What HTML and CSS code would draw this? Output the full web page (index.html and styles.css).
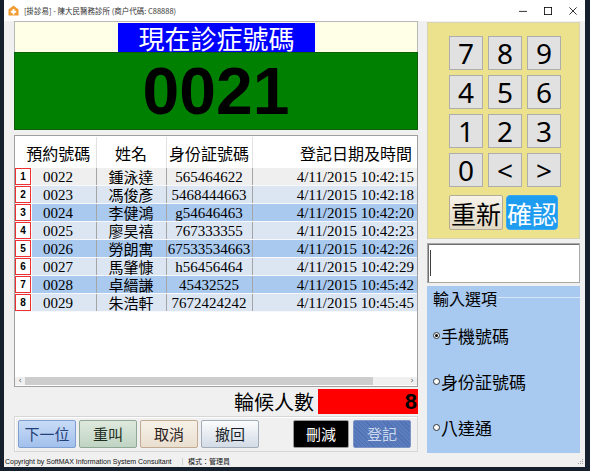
FILE: index.html
```html
<!DOCTYPE html>
<html lang="zh-Hant">
<head>
    <meta charset="UTF-8">
    <meta name="viewport" content="width=device-width, initial-scale=1.0">
    <title>掛診易</title>
    <link rel="stylesheet" href="styles.css">
</head>
<body>
    <div class="window">
        <div class="titlebar">
            <svg class="app-icon" viewBox="0 0 11 11">
                <path d="M5.5 0.5 L10.5 4.5 L10.5 10.5 L0.5 10.5 L0.5 4.5 Z" fill="#f29a2e"/>
                <rect x="4.5" y="4" width="2" height="5.5" fill="#fff"/>
                <rect x="2.75" y="5.75" width="5.5" height="2" fill="#fff"/>
            </svg>
            <span class="title-text">[掛診易] - 陳大民醫務診所 (商户代碼: C88888)</span>
            <div class="win-controls">
                <span class="ctl"><svg viewBox="0 0 10 10"><path d="M0 5.5 H10" stroke="#000" stroke-width="1"/></svg></span>
                <span class="ctl"><svg viewBox="0 0 10 10"><rect x="0.5" y="0.5" width="9" height="9" fill="none" stroke="#000"/></svg></span>
                <span class="ctl"><svg viewBox="0 0 10 10"><path d="M0.5 0.5 L9.5 9.5 M9.5 0.5 L0.5 9.5" stroke="#000"/></svg></span>
            </div>
        </div>

        <div class="main">
            <div class="left">
                <div class="now-bar"><div class="now-label">現在診症號碼</div></div>
                <div class="now-number">0021</div>

                <div class="list-box">
                    <table class="queue">
                        <colgroup>
                            <col class="c-mark"><col class="c-no"><col class="c-name"><col class="c-id"><col class="c-date">
                        </colgroup>
                        <thead>
                            <tr>
                                <th class="h-no" colspan="2">預約號碼</th>
                                <th>姓名</th>
                                <th>身份証號碼</th>
                                <th class="h-date">登記日期及時間</th>
                            </tr>
                        </thead>
                        <tbody>
                            <tr class="row-sel"><td class="mark"><span>1</span></td><td class="no">0022</td><td class="name">鍾泳達</td><td class="id">565464622</td><td class="date">4/11/2015 10:42:15</td></tr>
                            <tr class="row-a"><td class="mark"><span>2</span></td><td class="no">0023</td><td class="name">馮俊彥</td><td class="id">5468444663</td><td class="date">4/11/2015 10:42:18</td></tr>
                            <tr class="row-b"><td class="mark"><span>3</span></td><td class="no">0024</td><td class="name">李健鴻</td><td class="id">g54646463</td><td class="date">4/11/2015 10:42:20</td></tr>
                            <tr class="row-a"><td class="mark"><span>4</span></td><td class="no">0025</td><td class="name">廖昊禧</td><td class="id">767333355</td><td class="date">4/11/2015 10:42:23</td></tr>
                            <tr class="row-b"><td class="mark"><span>5</span></td><td class="no">0026</td><td class="name">勞朗寓</td><td class="id">67533534663</td><td class="date">4/11/2015 10:42:26</td></tr>
                            <tr class="row-a"><td class="mark"><span>6</span></td><td class="no">0027</td><td class="name">馬肇慷</td><td class="id">h56456464</td><td class="date">4/11/2015 10:42:29</td></tr>
                            <tr class="row-b"><td class="mark"><span>7</span></td><td class="no">0028</td><td class="name">卓縉謙</td><td class="id">45432525</td><td class="date">4/11/2015 10:45:42</td></tr>
                            <tr class="row-a"><td class="mark"><span>8</span></td><td class="no">0029</td><td class="name">朱浩軒</td><td class="id">7672424242</td><td class="date">4/11/2015 10:45:45</td></tr>
                        </tbody>
                    </table>
                    <div class="list-empty"></div>
                    <div class="hscroll">
                        <span class="arrow">&lsaquo;</span>
                        <div class="thumb"></div>
                        <span class="arrow arrow-right">&rsaquo;</span>
                    </div>
                </div>

                <div class="waiting">
                    <span class="waiting-label">輪候人數</span>
                    <div class="waiting-count">8</div>
                </div>

                <div class="actions">
                    <button class="btn btn-next">下一位</button>
                    <button class="btn btn-recall">重叫</button>
                    <button class="btn btn-cancel">取消</button>
                    <button class="btn btn-undo">撤回</button>
                    <div class="spacer"></div>
                    <button class="btn btn-delete">刪減</button>
                    <button class="btn btn-register">登記</button>
                </div>
            </div>

            <div class="right">
                <div class="keypad">
                    <div class="keys">
                        <button class="key">7</button>
                        <button class="key">8</button>
                        <button class="key">9</button>
                        <button class="key">4</button>
                        <button class="key">5</button>
                        <button class="key">6</button>
                        <button class="key">1</button>
                        <button class="key">2</button>
                        <button class="key">3</button>
                        <button class="key">0</button>
                        <button class="key">&lt;</button>
                        <button class="key">&gt;</button>
                    </div>
                    <div class="keypad-actions">
                        <button class="reset">重新</button>
                        <button class="confirm">確認</button>
                    </div>
                </div>

                <div class="input-box"><span class="caret"></span></div>

                <div class="options">
                    <div class="legend-row"><span class="legend">輸入選項</span><span class="legend-line"></span></div>
                    <div class="radio"><span class="dot checked"></span>手機號碼</div>
                    <div class="radio"><span class="dot"></span>身份証號碼</div>
                    <div class="radio"><span class="dot"></span>八達通</div>
                </div>
            </div>
        </div>

        <div class="statusbar">
            <span class="copyright">Copyright by SoftMAX Information System Consultant</span>
            <span class="mode">模式：管理員</span>
            <svg class="grip" viewBox="0 0 8 8">
                <rect x="6" y="2" width="1" height="1" fill="#a0a0a0"/>
                <rect x="4" y="4" width="1" height="1" fill="#a0a0a0"/>
                <rect x="6" y="4" width="1" height="1" fill="#a0a0a0"/>
                <rect x="2" y="6" width="1" height="1" fill="#a0a0a0"/>
                <rect x="4" y="6" width="1" height="1" fill="#a0a0a0"/>
                <rect x="6" y="6" width="1" height="1" fill="#a0a0a0"/>
            </svg>
        </div>
    </div>
</body>
</html>
```

FILE: styles.css
```css
body {
    margin: 0;
    width: 590px;
    height: 471px;
    overflow: hidden;
    background-color: #15202c;
}
.window {
    margin-left: 4px;
    width: 581px;
    height: 467px;
    background-color: #f0f0f0;
    display: flex;
    flex-direction: column;
    font-family: "Noto Sans CJK TC", sans-serif;
}

/* title bar */
.titlebar {
    height: 21px;
    background: #fff;
    display: flex;
    align-items: center;
    padding-left: 4px;
}
.app-icon {
    width: 11px;
    height: 11px;
    margin-right: 5px;
}
.title-text {
    font-size: 7.5px;
    color: #333;
}
.win-controls {
    margin-left: auto;
    display: flex;
}
.win-controls .ctl {
    width: 25px;
    height: 21px;
    display: flex;
    align-items: center;
    justify-content: center;
}
.win-controls svg {
    width: 8px;
    height: 8px;
}

/* main */
.main {
    display: flex;
    gap: 9px;
    padding: 0 5px 0 10px;
    height: 434px;
}
.left {
    width: 404px;
    display: flex;
    flex-direction: column;
}
.now-bar {
    height: 31px;
    box-sizing: border-box;
    background: #fffee6;
    border: 1px solid #b8b8b8;
    border-bottom: none;
    padding: 1px 0 0 103px;
}
.now-label {
    width: 197px;
    height: 100%;
    background: #0000ff;
    color: #fff;
    font-size: 26px;
    line-height: 30px;
    text-align: center;
}
.now-number {
    height: 78px;
    box-sizing: border-box;
    background: #008000;
    border: 1px solid #0b5e0b;
    font-family: "Liberation Sans", Arial, sans-serif;
    font-weight: bold;
    font-size: 66px;
    line-height: 76px;
    text-align: center;
    color: #000;
}

/* queue list */
.list-box {
    margin-top: 5px;
    height: 252px;
    box-sizing: border-box;
    border: 1px solid #a0a0a0;
    background: #fff;
    display: flex;
    flex-direction: column;
}
.queue {
    border-collapse: collapse;
    table-layout: fixed;
    width: 402px;
    margin-top: 1px;
    font-family: "Liberation Serif", "Noto Sans CJK TC", serif;
    font-size: 15px;
}
.c-mark { width: 17px; }
.c-no { width: 64px; }
.c-name { width: 70px; }
.c-id { width: 86px; }
.c-date { width: 165px; }
.queue th {
    height: 31px;
    padding: 0;
    font-family: "Noto Sans CJK TC", sans-serif;
    font-weight: normal;
    font-size: 16px;
    border-right: 1px solid #e2e2e2;
    text-align: center;
}
.queue th.h-no {
    padding-left: 6px;
}
.queue th.h-date {
    text-align: right;
    padding-right: 5px;
    border-right: none;
}
.queue td {
    height: 16.4px;
    padding: 0;
    line-height: 16px;
    border-bottom: 1px solid #f6f8fb;
    border-right: 1px solid #a5a5a5;
    white-space: nowrap;
}
.queue td.mark {
    background: #fff;
    border-right: none;
    padding: 0 1px 0 0;
}
.queue td.mark span {
    display: block;
    height: 17px;
    box-sizing: border-box;
    border: 1px solid #f03030;
    font-family: "Liberation Sans", Arial, sans-serif;
    font-weight: bold;
    font-size: 10px;
    line-height: 15px;
    text-align: center;
}
.queue td.no { padding-left: 11px; }
.queue td.name {
    text-align: center;
    font-family: "Noto Sans CJK TC", sans-serif;
}
.queue td.id { text-align: center; }
.queue td.date {
    text-align: right;
    padding-right: 3px;
    border-right: none;
}
.row-sel td { background: #efefef; }
.row-a td { background: #dce6f3; }
.row-b td { background: #a9c9ef; }

.list-empty { flex: 1; }
.hscroll {
    height: 8px;
    margin-bottom: 1px;
    background: #f0f0f0;
    display: flex;
    align-items: center;
}
.hscroll .arrow {
    width: 10px;
    font-family: "DejaVu Sans", sans-serif;
    font-size: 8px;
    line-height: 8px;
    color: #606060;
    text-align: center;
}
.hscroll .thumb {
    width: 348px;
    height: 8px;
    background: #cdcdcd;
}
.hscroll .arrow-right { margin-left: auto; }

/* waiting count */
.waiting {
    margin-top: 2px;
    height: 25px;
    display: flex;
    justify-content: flex-end;
    align-items: center;
}
.waiting-label {
    font-size: 20px;
    margin-right: 4px;
}
.waiting-count {
    width: 100px;
    height: 25px;
    background: #ff0000;
    text-align: right;
    padding-right: 1px;
    box-sizing: border-box;
    font-family: "Liberation Sans", Arial, sans-serif;
    font-weight: bold;
    font-size: 22px;
    line-height: 26px;
}

/* action buttons */
.actions {
    margin-top: 2px;
    height: 36px;
    box-sizing: border-box;
    border: 1px solid #d6d6d6;
    box-shadow: inset 1px 1px #fff;
    display: flex;
    align-items: center;
    gap: 3px;
    padding: 0 6px 0 3px;
}
.spacer { flex: 1; }
.btn {
    width: 58px;
    height: 28px;
    padding: 0;
    box-sizing: border-box;
    border-radius: 2px;
    font-family: "Noto Sans CJK TC", sans-serif;
    font-size: 15px;
    line-height: 26px;
}
.btn-next {
    background: linear-gradient(#c9dcf6, #a2c0ec);
    border: 1px solid #7d9fd2;
    color: #23407a;
}
.btn-recall {
    background: linear-gradient(#dde9dd, #c0d4c3);
    border: 1px solid #8fa893;
    color: #1f2f22;
}
.btn-cancel {
    background: linear-gradient(#f6f1e8, #e9dfcf);
    border: 1px solid #c2ab93;
    color: #2a2018;
}
.btn-undo {
    background: linear-gradient(#fbfcfd, #d3dbe6);
    border: 1px solid #a3acb9;
    color: #1a1f2a;
}
.btn-delete {
    width: 56px;
    margin-right: 1px;
    background: #000;
    border: 1px solid #9a9a9a;
    color: #fff;
}
.btn-register {
    background: repeating-linear-gradient(45deg, #5b7dbe 0, #5b7dbe 2px, #4f70b2 2px, #4f70b2 3px);
    border: 1px solid #7d95c6;
    color: #cbd7ee;
}

/* right column */
.right {
    width: 153px;
    display: flex;
    flex-direction: column;
    padding-top: 1px;
}
.keypad {
    height: 217px;
    box-sizing: border-box;
    background: #ece28d;
    border: 1px solid #d6d2b4;
    padding: 13px 0 0 21px;
}
.keys {
    display: grid;
    grid-template-columns: repeat(3, 34px);
    grid-auto-rows: 34px;
    gap: 5px;
}
.key {
    padding: 0;
    background: #e1e1e1;
    border: 1px solid #adadad;
    font-family: "Noto Sans", sans-serif;
    font-size: 28px;
    line-height: 30px;
    color: #000;
}
.keypad-actions {
    display: flex;
    gap: 3px;
    margin-top: 8px;
}
.reset, .confirm {
    height: 35px;
    padding: 0;
    box-sizing: border-box;
    font-family: "Noto Sans CJK TC", sans-serif;
    font-size: 25px;
    line-height: 32px;
}
.reset {
    width: 54px;
    background: linear-gradient(#f7f3e9, #e2d9c4);
    border: 1px solid #b3ab96;
    border-radius: 2px;
    color: #000;
}
.confirm {
    width: 52px;
    background: #1e9cf0;
    border: 1px solid #3aa8f0;
    border-radius: 4px;
    color: #fff;
}
.input-box {
    margin-top: 4px;
    height: 40px;
    box-sizing: border-box;
    background: #fff;
    border: 1px solid #a8a8a8;
    box-shadow: inset 1px 1px #707070;
    padding: 6px 0 0 2px;
}
.caret {
    display: block;
    width: 1px;
    height: 26px;
    background: #404040;
}
.options {
    margin-top: 3px;
    height: 167px;
    background: #a8caf0;
    padding-left: 6px;
}
.legend-row {
    height: 22px;
    display: flex;
    align-items: center;
    margin-bottom: 4px;
}
.legend {
    font-size: 16px;
    line-height: 20px;
    margin-top: 2px;
}
.legend-line {
    flex: 1;
    height: 1px;
    margin-left: 1px;
    background: #d6e5f7;
}
.radio {
    height: 46px;
    display: flex;
    align-items: center;
    font-size: 17px;
}
.dot {
    width: 7px;
    height: 7px;
    box-sizing: border-box;
    border: 1px solid #333;
    border-radius: 50%;
    background: #fff;
    margin-right: 1px;
    position: relative;
}
.dot.checked::after {
    content: "";
    position: absolute;
    left: 1px;
    top: 1px;
    width: 3px;
    height: 3px;
    border-radius: 50%;
    background: #000;
}

/* status bar */
.statusbar {
    height: 12px;
    margin-top: 1px;
    display: flex;
    align-items: center;
    padding-left: 1px;
    font-size: 7px;
    color: #111;
}
.copyright {
    font-family: "Liberation Sans", Arial, sans-serif;
    width: 177px;
    border-right: 1px solid #d0d0d0;
}
.mode {
    margin-left: 5px;
}
.grip {
    margin-left: auto;
    width: 8px;
    height: 8px;
    margin-right: 1px;
}
```
